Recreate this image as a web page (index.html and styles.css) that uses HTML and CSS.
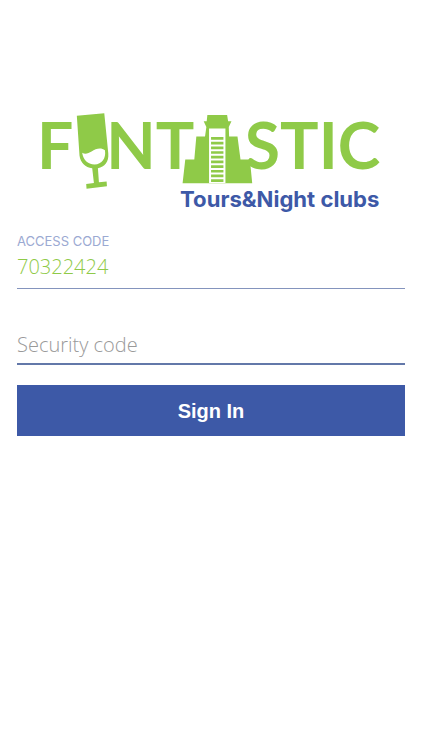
FILE: index.html
```html
<!DOCTYPE html>
<html lang="en">
<head>
    <meta charset="UTF-8">
    <meta name="viewport" content="width=device-width, initial-scale=1.0">
    <title>Sign In</title>
    <link rel="stylesheet" href="styles.css">
</head>
<body>
    <main class="container">
        <svg class="logo" viewBox="0 0 340 102" role="img" aria-label="Funtastic Tours&amp;Night clubs">
            <g class="logo-name">
                <text x="-3" y="57">F</text>
                <text x="66" y="57">NT</text>
                <text x="204" y="57">STIC</text>
            </g>
            <!-- wine glass -->
            <g transform="translate(-11 -12) scale(0.3333)">
                <path class="green" d="M143 47L225 40L237 160C239 185 226 200 206 204L209 246L232 244L233 258L172 265L171 251L194 248L189 204C168 202 154 188 151 166Z"/>
                <path class="white" d="M159 158C169 164 178 159 187 154C200 145 215 141 227 150C231 174 218 191 196 193C175 193 162 179 159 158Z"/>
            </g>
            <!-- pyramid -->
            <g transform="translate(99 -12) scale(0.3333)">
                <path class="green" d="M203 45H262L265 64H275L267 81L268 109H293L302 178H330L337 249H129L137 178H164L170 109H196L200 81L192 64H201Z"/>
                <path class="white" d="M208 85H257V248H208Z"/>
                <path class="steps" d="M214 115H251M214 129H251M214 143H251M214 157H251M214 171H251M214 185H251M214 199H251M214 213H251M214 227H251M214 241H251"/>
            </g>
            <text class="tagline" x="338" y="95">Tours&amp;Night clubs</text>
        </svg>

        <form class="login-form">
            <label for="access_code">ACCESS CODE</label>
            <input type="text" id="access_code" name="access_code" value="70322424">
            <input type="text" id="security_code" class="security" name="security_code" placeholder="Security code" aria-label="Security code">
            <button type="submit">Sign In</button>
        </form>
    </main>
</body>
</html>
```
FILE: styles.css
```css
body {
    font-family: "Open Sans", sans-serif;
    background-color: #fff;
    margin: 0;
}

.container {
    padding: 112px 17px 20px;
}

.logo {
    display: block;
    width: 88%;
    margin: 0 auto;
    overflow: visible;
}

.logo-name {
    font-family: Lato, sans-serif;
    font-size: 64px;
    font-weight: bold;
    fill: #8fca48;
}

.green {
    fill: #8fca48;
}

.white {
    fill: #fff;
}

.steps {
    fill: none;
    stroke: #8fca48;
    stroke-width: 8;
}

.tagline {
    font-family: Inter, sans-serif;
    font-size: 22px;
    font-weight: bold;
    text-anchor: end;
    fill: #3d59a7;
}

.login-form {
    display: flex;
    flex-direction: column;
    margin-top: 19px;
}

label {
    font-family: Inter, sans-serif;
    font-size: 13px;
    line-height: 16px;
    color: #9ba9d2;
}

input {
    box-sizing: border-box;
    width: 100%;
    height: 40px;
    padding: 0 0 4px;
    border: none;
    border-bottom: 1px solid #8494bd;
    border-radius: 0;
    outline: none;
    background: none;
    font-family: "Open Sans", sans-serif;
    font-size: 20px;
    font-weight: 300;
    color: #8fca48;
}

.security {
    margin-top: 36px;
    padding: 0;
    border-bottom: 2px solid #6378a9;
}

input::placeholder {
    color: #999;
    opacity: 1;
}

button {
    height: 51px;
    margin-top: 20px;
    padding: 2px 0 0;
    border: none;
    background-color: #3d59a7;
    color: white;
    font-family: "Liberation Sans", Arial, sans-serif;
    font-size: 20px;
    font-weight: bold;
    cursor: pointer;
}
```
